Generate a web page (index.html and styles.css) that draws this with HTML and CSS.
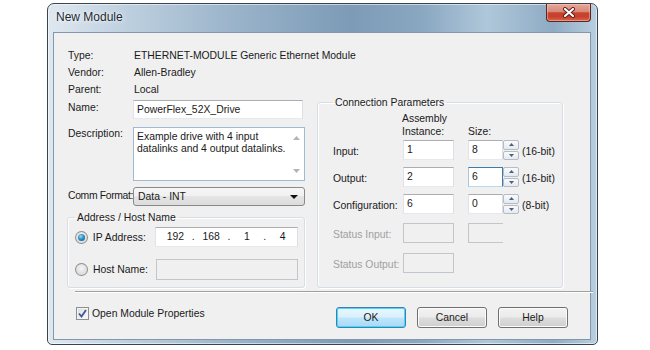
FILE: index.html
```html
<!DOCTYPE html>
<html lang="en">
<head>
    <meta charset="UTF-8">
    <title>New Module</title>
    <link rel="stylesheet" href="styles.css">
</head>
<body>
    <div class="window">
        <div class="titlebar">
            <span class="title">New Module</span>
            <div class="close">
                <svg width="14" height="11" viewBox="0 0 14 11">
                    <path d="M3 2 L11 9 M11 2 L3 9" stroke="#5a1a14" stroke-width="4" stroke-linecap="round"/>
                    <path d="M3 2 L11 9 M11 2 L3 9" stroke="#fff" stroke-width="2.2" stroke-linecap="round"/>
                </svg>
            </div>
        </div>

        <div class="client">
            <div class="info">
                <div class="info-row"><span class="key">Type:</span><span>ETHERNET-MODULE Generic Ethernet Module</span></div>
                <div class="info-row"><span class="key">Vendor:</span><span>Allen-Bradley</span></div>
                <div class="info-row"><span class="key">Parent:</span><span>Local</span></div>
            </div>

            <div class="columns">
                <div class="left">
                    <div class="form-row name-row">
                        <label class="form-label">Name:</label>
                        <div class="textbox name-box">PowerFlex_52X_Drive</div>
                    </div>
                    <div class="form-row desc-row">
                        <label class="form-label">Description:</label>
                        <div class="textarea">
                            <div class="textarea-text">Example drive with 4 input datalinks and 4 output datalinks.</div>
                            <div class="vscroll">
                                <svg width="7" height="4" viewBox="0 0 7 4"><path d="M0 4 L3.5 0 L7 4 Z" fill="#b4b4b4"/></svg>
                                <svg width="7" height="4" viewBox="0 0 7 4"><path d="M0 0 L3.5 4 L7 0 Z" fill="#b4b4b4"/></svg>
                            </div>
                        </div>
                    </div>
                    <div class="form-row comm-row">
                        <label class="form-label">Comm Format:</label>
                        <div class="combo">
                            <span>Data - INT</span>
                            <svg width="8" height="4" viewBox="0 0 8 4"><path d="M0 0 L8 0 L4 4 Z" fill="#111"/></svg>
                        </div>
                    </div>

                    <fieldset class="group address">
                        <legend>Address / Host Name</legend>
                        <div class="radio-row">
                            <span class="radio checked"></span>
                            <span class="radio-label">IP Address:</span>
                            <div class="textbox ipbox">
                                <span class="octet">192</span><span class="dot">.</span>
                                <span class="octet">168</span><span class="dot">.</span>
                                <span class="octet">1</span><span class="dot">.</span>
                                <span class="octet">4</span>
                            </div>
                        </div>
                        <div class="radio-row host-row">
                            <span class="radio"></span>
                            <span class="radio-label">Host Name:</span>
                            <div class="textbox disabled hostbox"></div>
                        </div>
                    </fieldset>
                </div>

                <fieldset class="group conn">
                    <legend>Connection Parameters</legend>
                    <div class="conn-head">
                        <span class="head-inst">Assembly<br>Instance:</span>
                        <span class="head-size">Size:</span>
                    </div>
                    <div class="conn-row">
                        <span class="conn-label">Input:</span>
                        <div class="textbox inst">1</div>
                        <div class="textbox size">8</div>
                        <div class="spin">
                            <span class="spin-btn"><svg width="5" height="3" viewBox="0 0 5 3"><path d="M0 3 L2.5 0 L5 3 Z" fill="#4c607e"/></svg></span>
                            <span class="spin-btn"><svg width="5" height="3" viewBox="0 0 5 3"><path d="M0 0 L2.5 3 L5 0 Z" fill="#4c607e"/></svg></span>
                        </div>
                        <span class="unit">(16-bit)</span>
                    </div>
                    <div class="conn-row">
                        <span class="conn-label">Output:</span>
                        <div class="textbox inst">2</div>
                        <div class="textbox size focused">6</div>
                        <div class="spin">
                            <span class="spin-btn"><svg width="5" height="3" viewBox="0 0 5 3"><path d="M0 3 L2.5 0 L5 3 Z" fill="#4c607e"/></svg></span>
                            <span class="spin-btn"><svg width="5" height="3" viewBox="0 0 5 3"><path d="M0 0 L2.5 3 L5 0 Z" fill="#4c607e"/></svg></span>
                        </div>
                        <span class="unit">(16-bit)</span>
                    </div>
                    <div class="conn-row">
                        <span class="conn-label">Configuration:</span>
                        <div class="textbox inst">6</div>
                        <div class="textbox size">0</div>
                        <div class="spin">
                            <span class="spin-btn"><svg width="5" height="3" viewBox="0 0 5 3"><path d="M0 3 L2.5 0 L5 3 Z" fill="#4c607e"/></svg></span>
                            <span class="spin-btn"><svg width="5" height="3" viewBox="0 0 5 3"><path d="M0 0 L2.5 3 L5 0 Z" fill="#4c607e"/></svg></span>
                        </div>
                        <span class="unit">(8-bit)</span>
                    </div>
                    <div class="conn-row status-in">
                        <span class="conn-label muted">Status Input:</span>
                        <div class="textbox inst disabled"></div>
                        <div class="textbox size disabled cut"></div>
                    </div>
                    <div class="conn-row status-out">
                        <span class="conn-label muted">Status Output:</span>
                        <div class="textbox inst disabled"></div>
                    </div>
                </fieldset>
            </div>

            <div class="separator"></div>

            <div class="footer">
                <label class="check">
                    <span class="checkbox">
                        <svg width="9" height="9" viewBox="0 0 9 9"><path d="M1 4.5 L3.5 7.5 L8 1" fill="none" stroke="#3b5998" stroke-width="1.8"/></svg>
                    </span>
                    <span>Open Module Properties</span>
                </label>
                <div class="buttons">
                    <button class="btn default">OK</button>
                    <button class="btn">Cancel</button>
                    <button class="btn">Help</button>
                </div>
            </div>
        </div>
    </div>
</body>
</html>
```

FILE: styles.css
```css
body {
    margin: 0;
    background-color: #fff;
    font-family: "Liberation Sans", Arial, sans-serif;
    font-size: 10.4px;
    color: #1a1a1a;
}

/* window frame */
.window {
    box-sizing: border-box;
    width: 551px;
    height: 342px;
    margin: 3px 0 0 47px;
    padding: 0 6px 4px 5px;
    display: flex;
    flex-direction: column;
    border: 1px solid #39444f;
    border-radius: 7px 7px 5px 5px;
    background: linear-gradient(90deg, #dfe8f0 0%, #c2d3e2 12%, #98b2c9 35%, #7d9bb7 55%, #8aa7c1 68%, #afc7da 80%, #8eabc4 92%, #b9cfe0 100%);
    box-shadow: inset 0 0 0 1px rgba(255, 255, 255, 0.55);
}
.titlebar {
    height: 28px;
    display: flex;
    align-items: flex-start;
}
.title {
    margin: 6px 0 0 3px;
    font-size: 12px;
    line-height: 14px;
    color: #1c2731;
    text-shadow: 0 0 6px rgba(255, 255, 255, 0.9), 0 0 2px rgba(255, 255, 255, 0.9);
}
.close {
    margin-left: auto;
    width: 45px;
    height: 18px;
    box-sizing: border-box;
    display: flex;
    align-items: center;
    justify-content: center;
    border: 1px solid #5b2420;
    border-top: none;
    border-radius: 0 0 4px 4px;
    background: linear-gradient(#e6a898 0%, #d88a7a 45%, #c7442e 52%, #c8402b 75%, #d9684f 100%);
    box-shadow: inset 0 0 0 1px rgba(255, 210, 200, 0.45);
}

/* dialog body */
.client {
    flex: 1;
    box-sizing: border-box;
    padding: 14px 0 0 13px;
    background-color: #f0f0f0;
    border: 1px solid #8397aa;
    white-space: nowrap;
}
.info-row {
    display: flex;
    height: 17px;
    line-height: 17px;
    padding-left: 1px;
}
.info-row .key {
    width: 66px;
}

.columns {
    display: flex;
    gap: 12px;
}
.left {
    width: 238px;
}
.form-row {
    display: flex;
    align-items: flex-start;
}
.form-label {
    width: 65px;
    padding-left: 1px;
    line-height: 13px;
}
.name-row {
    margin-top: 2px;
}
.name-row .form-label {
    padding-top: 1px;
}
.desc-row {
    margin-top: 8px;
}
.comm-row {
    margin-top: 6px;
}
.comm-row .form-label {
    padding-top: 2px;
    letter-spacing: -0.35px;
}

.textbox {
    box-sizing: border-box;
    height: 20px;
    padding: 2px 3px 0;
    line-height: 14px;
    background-color: #fff;
    border: 1px solid #abadb3;
    border-left-color: #e2e3ea;
    border-right-color: #dbdfe6;
    border-bottom-color: #e3e9ef;
}
.textbox.disabled {
    background-color: #f0f0f0;
    border: 1px solid #c3c5c9;
}
.textbox.focused {
    border-color: #3d7bad;
    border-left-color: #a4c9e3;
    border-bottom-color: #b7d9ed;
}
.name-box {
    width: 170px;
    height: 19px;
    padding-top: 2px;
}

.textarea {
    box-sizing: border-box;
    width: 172px;
    height: 54px;
    display: flex;
    background-color: #fff;
    border: 1px solid #9fbad2;
}
.textarea-text {
    flex: 1;
    padding: 3px 0 0 3px;
    line-height: 12px;
    white-space: normal;
}
.vscroll {
    width: 16px;
    display: flex;
    flex-direction: column;
    align-items: center;
    justify-content: space-between;
    padding: 8px 0 7px;
}

.combo {
    box-sizing: border-box;
    width: 172px;
    height: 19px;
    display: flex;
    align-items: center;
    justify-content: space-between;
    padding: 0 6px 0 4px;
    border: 1px solid #8a8a8a;
    border-radius: 3px;
    background: linear-gradient(#f6f6f6, #f0f0f0 50%, #e5e5e5 50%, #dcdcdc);
}

/* group boxes */
.group {
    box-sizing: border-box;
    margin: 0;
    padding: 0 6px 0 7px;
    min-width: 0;
    border: 1px solid #d5dfe5;
    border-radius: 3px;
    box-shadow: inset 1px 1px 0 #fff, 1px 1px 0 #fff;
}
.group legend {
    margin-left: 0;
    padding: 0 2px;
    line-height: 13px;
}
.address {
    width: 238px;
    height: 77px;
    margin-top: 5px;
}
.radio-row {
    display: flex;
    align-items: center;
    margin-top: 3px;
}
.host-row {
    margin-top: 12px;
}
.radio {
    box-sizing: border-box;
    width: 13px;
    height: 13px;
    border-radius: 50%;
    border: 1px solid #8e8f8f;
    background: radial-gradient(circle at 50% 40%, #f4f4f4 0%, #e0e0e0 60%, #cfcfcf 100%);
    display: flex;
    align-items: center;
    justify-content: center;
}
.radio.checked::after {
    content: "";
    width: 7px;
    height: 7px;
    border-radius: 50%;
    background: radial-gradient(circle at 40% 35%, #8fe0f8 0%, #2f8fc6 45%, #134f79 100%);
}
.radio-label {
    width: 63px;
    margin-left: 5px;
}
.ipbox {
    width: 143px;
    display: flex;
    padding: 2px 0 0 5px;
}
.octet {
    width: 30px;
    text-align: center;
}
.dot {
    width: 7px;
    text-align: center;
}
.hostbox {
    width: 143px;
    height: 21px;
}

.conn {
    width: 246px;
    height: 192px;
    margin-top: -2px;
    padding: 0 6px 0 15px;
}
.conn-head {
    display: flex;
    align-items: flex-end;
    margin-top: 3px;
    line-height: 13px;
}
.head-inst {
    width: 66px;
    margin-left: 69px;
}
.conn-row {
    display: flex;
    align-items: flex-start;
    margin-top: 7px;
}
.conn-head + .conn-row {
    margin-top: 2px;
}
.conn-row.status-in {
    margin-top: 9px;
}
.conn-row.status-out {
    margin-top: 10px;
}
.conn-label {
    width: 70px;
    padding-top: 5px;
    line-height: 13px;
}
.conn-label.muted {
    color: #a0a0a0;
}
.inst {
    width: 51px;
}
.size {
    width: 35px;
    margin-left: 14px;
}
.size.cut {
    border-right: none;
}
.spin {
    width: 16px;
    height: 20px;
    display: flex;
    flex-direction: column;
    gap: 1px;
}
.spin-btn {
    box-sizing: border-box;
    flex: 1;
    display: flex;
    align-items: center;
    justify-content: center;
    border: 1px solid #b3bcc7;
    border-radius: 2px;
    background: linear-gradient(#f9fafb, #e6eaee);
}
.unit {
    margin-left: 3px;
    padding-top: 5px;
    line-height: 13px;
}

.separator {
    width: 518px;
    margin: 3px 0 0 8px;
    border-top: 1px solid #a0a0a0;
    border-bottom: 1px solid #fff;
}

/* bottom row */
.footer {
    display: flex;
    align-items: flex-start;
    padding: 13px 22px 0 9px;
}
.check {
    display: flex;
    align-items: center;
    gap: 3px;
    margin-top: 1px;
    line-height: 13px;
}
.checkbox {
    box-sizing: border-box;
    width: 13px;
    height: 13px;
    display: flex;
    align-items: center;
    justify-content: center;
    border: 1px solid #8e8f8f;
    background: linear-gradient(135deg, #dcdcdc, #fbfbfb);
    box-shadow: inset 0 0 0 1px #f4f4f4;
}
.buttons {
    margin-left: auto;
    margin-top: 1px;
    display: flex;
    gap: 11px;
}
.btn {
    box-sizing: border-box;
    width: 70px;
    height: 21px;
    padding: 0;
    font-family: "Liberation Sans", Arial, sans-serif;
    font-size: 10.4px;
    color: #1a1a1a;
    border: 1px solid #707070;
    border-radius: 3px;
    background: linear-gradient(#f2f2f2 0%, #ebebeb 48%, #dddddd 52%, #cfcfcf 100%);
    box-shadow: inset 0 0 0 1px #fcfcfc;
}
.btn.default {
    border-color: #3c7fb1;
    box-shadow: inset 0 0 0 1px #48d8fb;
    background: linear-gradient(#eaf6fd 0%, #d9f0fc 48%, #bee6fd 52%, #a7d9f5 100%);
}
```
